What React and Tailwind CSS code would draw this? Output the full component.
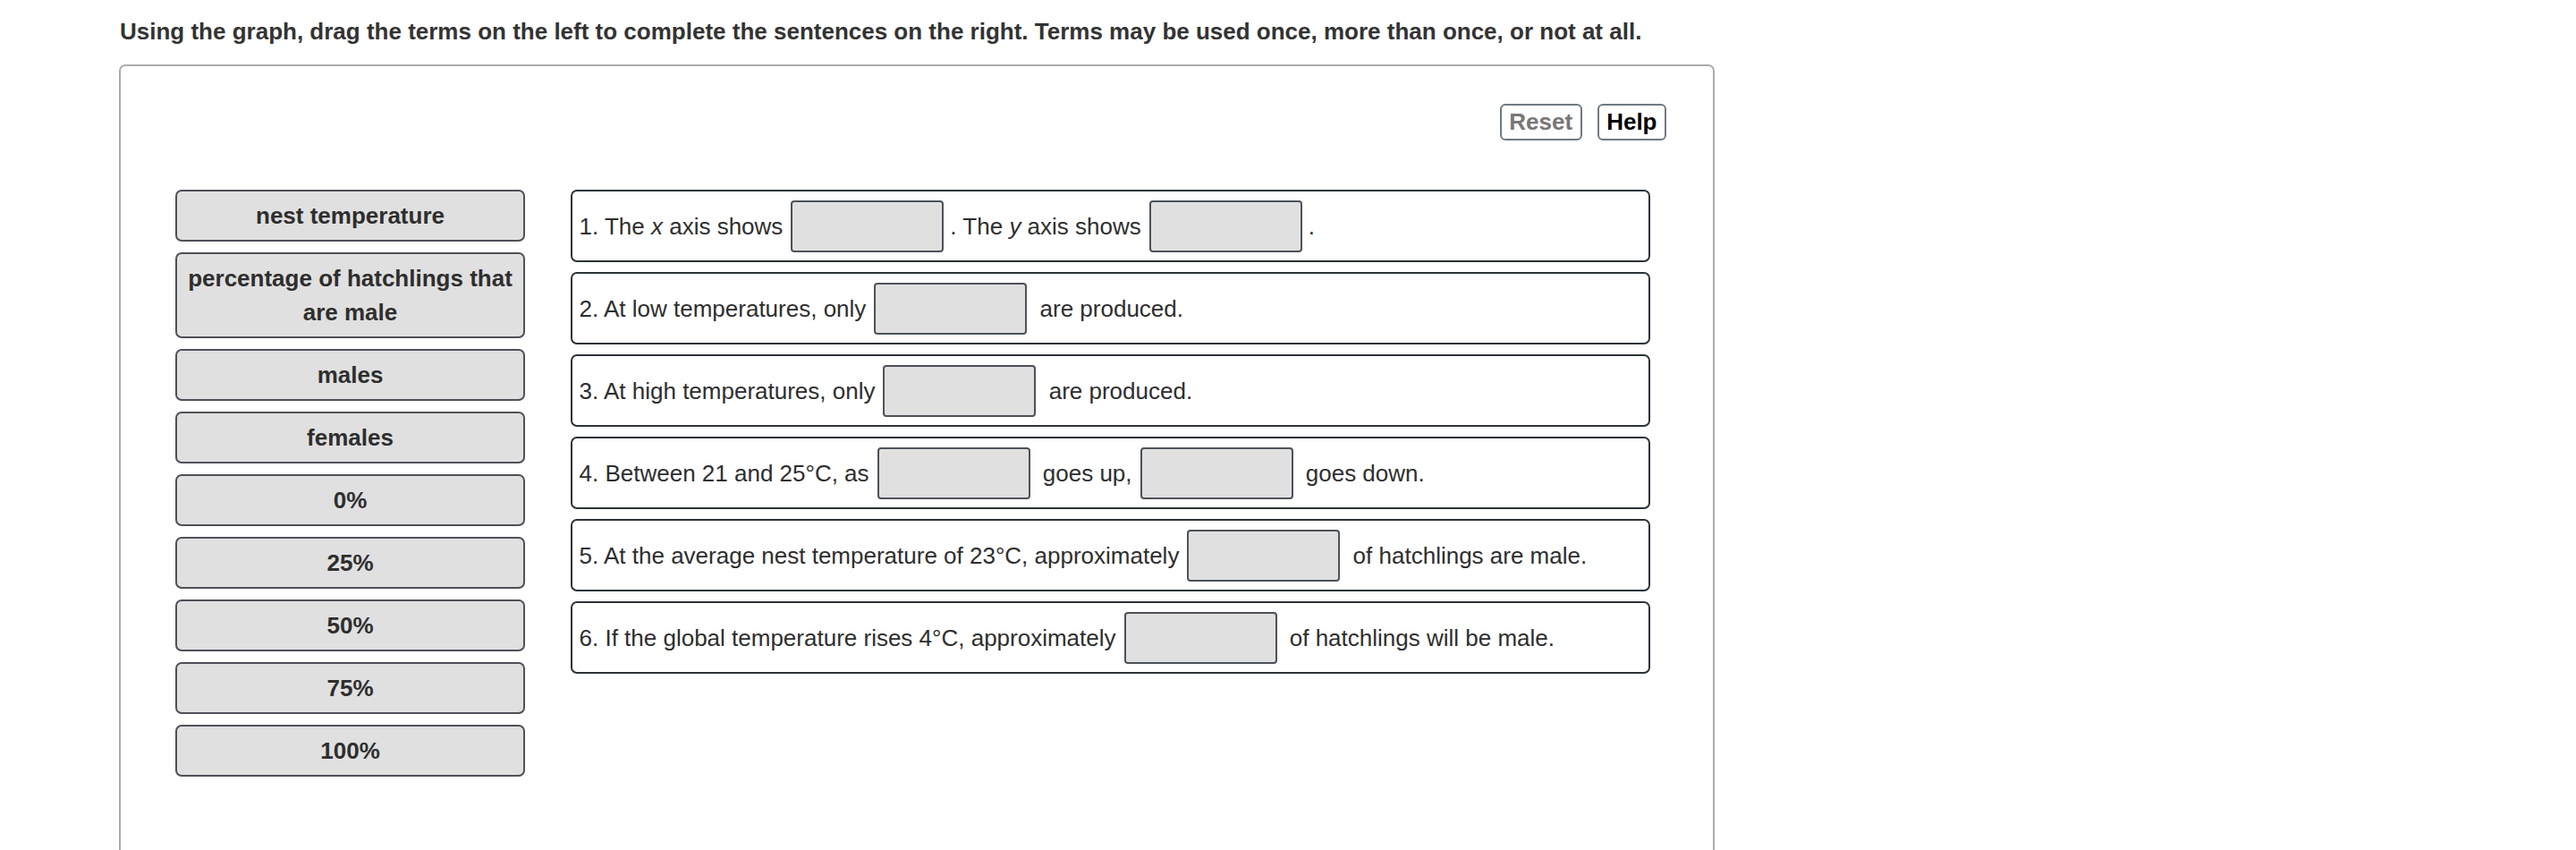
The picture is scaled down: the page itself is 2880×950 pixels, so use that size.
import React from "react";

const TERMS = [
  "nest temperature",
  "percentage of hatchlings that are male",
  "males",
  "females",
  "0%",
  "25%",
  "50%",
  "75%",
  "100%",
];

function Blank() {
  return (
    <span className="inline-block shrink-0 w-[171px] h-[58px] ml-[9px] mr-[7px] bg-[#e0e0e0] border-2 border-[#4d5259] rounded-[4px]" />
  );
}

function T({ children }) {
  return <span className="whitespace-pre">{children}</span>;
}

function Sentence({ children }) {
  return (
    <div className="flex items-center h-[81px] pl-[7.5px] pr-[6px] border-[2.5px] border-[#2c3338] rounded-[7px] bg-white text-[26px] text-[#2e2e2e] leading-[30px]">
      {children}
    </div>
  );
}

export default function App() {
  return (
    <div className="h-screen overflow-hidden bg-white font-['Liberation_Sans',Arial,sans-serif] text-[#333]">
      <h1 className="pt-[20px] pl-[134px] text-[26px] leading-[30px] font-bold">
        Using the graph, drag the terms on the left to complete the sentences on the right. Terms may be used once, more than once, or not at all.
      </h1>

      <div className="mt-[22px] ml-[133px] w-[1784px] h-[1000px] border-2 border-[#ababab] rounded-[7px]">
        <div className="flex justify-end gap-[17px] pt-[42px] pr-[52px]">
          <button className="h-[41px] px-[8.5px] border-2 border-[#6f7a82] rounded-[6px] text-[26px] leading-[37px] font-bold text-[#777]">
            Reset
          </button>
          <button className="h-[41px] px-[8.5px] border-2 border-[#6f7a82] rounded-[6px] text-[26px] leading-[37px] font-bold text-black">
            Help
          </button>
        </div>

        <div className="flex gap-[51px] mt-[55px] pl-[61px]">
          <div className="flex flex-col gap-[12px] w-[391px]">
            {TERMS.map((t) => (
              <div
                key={t}
                className="px-[10px] py-[8px] border-2 border-[#4f5058] rounded-[7px] bg-[#e0e0e0] text-center text-[26px] leading-[38px] font-bold text-[#2e2e2e]"
              >
                {t}
              </div>
            ))}
          </div>

          <div className="flex flex-col gap-[11px] w-[1207px]">
            <Sentence>
              <T>
                1. The <i>x</i> axis shows
              </T>
              <Blank />
              <T>
                . The <i>y</i> axis shows
              </T>
              <Blank />
              <T>.</T>
            </Sentence>
            <Sentence>
              <T>2. At low temperatures, only</T>
              <Blank />
              <T> are produced.</T>
            </Sentence>
            <Sentence>
              <T>3. At high temperatures, only</T>
              <Blank />
              <T> are produced.</T>
            </Sentence>
            <Sentence>
              <T>4. Between 21 and 25°C, as</T>
              <Blank />
              <T> goes up,</T>
              <Blank />
              <T> goes down.</T>
            </Sentence>
            <Sentence>
              <T>5. At the average nest temperature of 23°C, approximately</T>
              <Blank />
              <T> of hatchlings are male.</T>
            </Sentence>
            <Sentence>
              <T>6. If the global temperature rises 4°C, approximately</T>
              <Blank />
              <T> of hatchlings will be male.</T>
            </Sentence>
          </div>
        </div>
      </div>
    </div>
  );
}
